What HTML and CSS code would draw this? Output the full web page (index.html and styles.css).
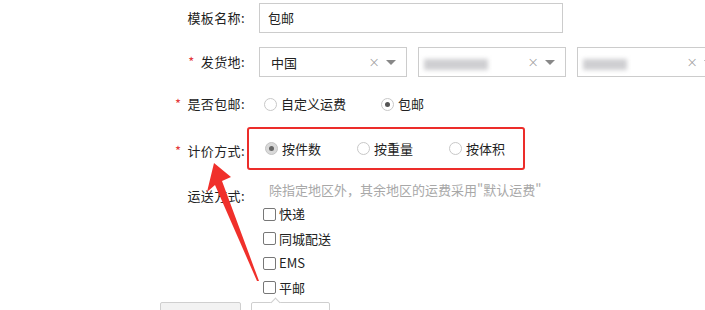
FILE: index.html
```html
<!DOCTYPE html>
<html lang="zh-CN">
<head>
<meta charset="utf-8">
<title>运费模板</title>
<link rel="stylesheet" href="styles.css">
</head>
<body>
<div class="page">
  <div class="form">
    <div class="row row-name">
      <div class="lbl">模板名称:</div>
      <div class="ctl">
        <div class="input">包邮</div>
      </div>
    </div>
    <div class="row row-origin">
      <div class="lbl"><span class="req">*</span>发货地:</div>
      <div class="ctl selects">
        <div class="select">
          <span class="sel-text">中国</span>
          <span class="clear">×</span><span class="caret"></span>
        </div>
        <div class="select">
          <span class="blur blur-a"></span>
          <span class="clear">×</span><span class="caret"></span>
        </div>
        <div class="select">
          <span class="blur blur-b"></span>
          <span class="clear">×</span><span class="caret"></span>
        </div>
      </div>
    </div>
    <div class="row row-free">
      <div class="lbl"><span class="req">*</span>是否包邮:</div>
      <div class="ctl radios">
        <label class="radio"><span class="circle"></span>自定义运费</label>
        <label class="radio"><span class="circle on"></span>包邮</label>
      </div>
    </div>
    <div class="row row-price">
      <div class="lbl"><span class="req">*</span>计价方式:</div>
      <div class="ctl">
        <div class="mark radios">
          <label class="radio"><span class="circle on grey"></span>按件数</label>
          <label class="radio"><span class="circle"></span>按重量</label>
          <label class="radio"><span class="circle"></span>按体积</label>
        </div>
      </div>
    </div>
    <div class="row row-ship">
      <div class="lbl lbl-ship">运送方式:</div>
      <div class="ctl">
        <div class="hint">除指定地区外，其余地区的运费采用"默认运费"</div>
        <div class="checks">
          <label class="check"><span class="box"></span>快递</label>
          <label class="check"><span class="box"></span>同城配送</label>
          <label class="check"><span class="box"></span>EMS</label>
          <label class="check"><span class="box"></span>平邮</label>
        </div>
      </div>
    </div>
    <div class="buttons">
      <div class="btn btn-grey"></div>
      <div class="btn btn-white"><span class="notch"></span></div>
    </div>
  </div>
  <svg class="arrow" width="705" height="310" viewBox="0 0 705 310" xmlns="http://www.w3.org/2000/svg">
    <polygon points="214,163 231,177 222,181 259,281 257,281 215,185 207,192" fill="#f0302b"/>
  </svg>
</div>
</body>
</html>
```
FILE: styles.css
```css
html, body {
  margin: 0;
  padding: 0;
  background: #fff;
}
body {
  font-family: "Noto Sans CJK SC", "Microsoft YaHei", sans-serif;
  font-size: 13px;
  color: #222;
  overflow: hidden;
  width: 705px;
  height: 310px;
}
.page {
  position: relative;
  width: 705px;
  height: 310px;
  overflow: hidden;
}
.form {
  padding-top: 3px;
  width: 760px;
}
.row {
  display: flex;
  align-items: center;
}
.lbl {
  width: 245px;
  margin-right: 14px;
  text-align: right;
  line-height: 18px;
  flex: none;
  white-space: nowrap;
  letter-spacing: 0.4px;
}
.req {
  color: #e4393c;
  margin-right: 6px;
}
.ctl {
  flex: none;
}
.input {
  width: 294px;
  height: 28px;
  border: 1px solid #ccc;
  padding-left: 8px;
  line-height: 28px;
  box-sizing: content-box;
}
.row-origin {
  margin-top: 14px;
}
.selects {
  display: flex;
  gap: 11px;
}
.select {
  border: 1px solid #ccc;
  display: flex;
  align-items: center;
  padding-left: 11px;
  padding-right: 10px;
  box-sizing: border-box;
  width: 148px;
  height: 30px;
}
.sel-text {
  flex: 1;
}
.blur {
  display: block;
  height: 11px;
  background: #cfcfd2;
  filter: blur(2px);
  margin-right: auto;
}
.blur-a {
  width: 64px;
  margin-left: -6px;
  margin-top: 4px;
}
.blur-b {
  width: 44px;
  margin-left: -6px;
  margin-top: 4px;
}
.clear {
  color: #999;
  font-size: 14px;
  line-height: 14px;
  margin-right: 6px;
  font-family: "DejaVu Sans", sans-serif;
  font-weight: 300;
}
.caret {
  width: 0;
  height: 0;
  border-left: 5px solid transparent;
  border-right: 5px solid transparent;
  border-top: 5px solid #888;
}
.row-free {
  margin-top: 17px;
  height: 20px;
}
.radios {
  display: flex;
  align-items: center;
}
.radio {
  display: flex;
  align-items: center;
  line-height: 18px;
  margin-right: 36px;
}
.row-free .radio:first-child {
  margin-left: 5px;
  margin-right: 35px;
}
.circle {
  width: 11px;
  height: 11px;
  border: 1px solid #c8c8c8;
  border-radius: 50%;
  margin-right: 4px;
  background: #fff;
  position: relative;
  flex: none;
}
.circle.on::after {
  content: "";
  position: absolute;
  left: 3px;
  top: 3px;
  width: 5px;
  height: 5px;
  border-radius: 50%;
  background: #555;
}
.circle.grey {
  background: #d9d9d9;
  border-color: #c4c4c4;
}
.circle.grey::after {
  background: #666;
}
.row-price {
  margin-top: 13px;
}
.row-price .lbl {
  padding-top: 4px;
}
.mark {
  margin-left: -12px;
  height: 39px;
  width: 258px;
  border: 2px solid #ec2d2a;
  border-radius: 3px;
  padding-left: 16px;
  box-sizing: content-box;
}
.mark .radio:last-child {
  margin-right: 0;
}
.row-ship {
  margin-top: 10px;
  align-items: flex-start;
}
.lbl-ship {
  padding-top: 7px;
}
.hint {
  color: #a8a8a8;
  margin-left: 10px;
  line-height: 20px;
}
.checks {
  display: flex;
  flex-direction: column;
  margin-left: 4px;
  margin-top: 2px;
}
.check {
  display: flex;
  align-items: center;
  height: 24.5px;
  line-height: 18px;
}
.box {
  width: 11px;
  height: 11px;
  border: 1px solid #777;
  border-radius: 2px;
  margin-right: 3px;
  flex: none;
}
.buttons {
  display: flex;
  gap: 10px;
  padding-left: 160px;
  margin-top: 2px;
}
.btn {
  height: 30px;
  border: 1px solid #cfcfcf;
  border-radius: 2px;
  position: relative;
}
.btn-grey {
  width: 79px;
  background: #f2f2f2;
}
.btn-white {
  width: 77px;
  background: #fff;
}
.notch {
  position: absolute;
  left: 20px;
  top: -4px;
  width: 6px;
  height: 6px;
  background: #fff;
  border-left: 1px solid #cfcfcf;
  border-top: 1px solid #cfcfcf;
  transform: rotate(45deg);
}
.arrow {
  position: absolute;
  left: 0;
  top: 0;
  pointer-events: none;
}
```
